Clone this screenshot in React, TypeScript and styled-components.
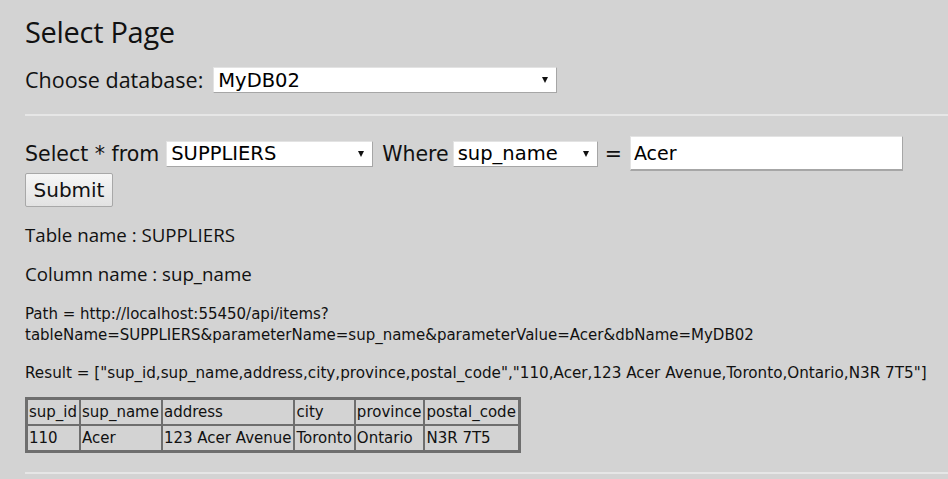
import React from "react";
import styled, { createGlobalStyle } from "styled-components";

const GlobalStyle = createGlobalStyle`
  html, body { margin: 0; padding: 0; background: #d3d3d3; }
  body { font-family: "Open Sans", "Noto Sans", sans-serif; color: #111; }
`;

const Page = styled.div`
  padding: 14px 0 0 25px;
  display: flex;
  flex-direction: column;
`;

const Title = styled.h1`
  margin: 0;
  font-family: "Open Sans", sans-serif;
  font-weight: 400;
  font-size: 29px;
  line-height: 36px;
  letter-spacing: -0.3px;
  color: #111;
`;

const Row = styled.div<{ $mt?: number }>`
  display: flex;
  align-items: center;
  margin-top: ${(p) => p.$mt ?? 0}px;
`;

const Label = styled.span`
  font-family: "Open Sans", sans-serif;
  font-size: 21.5px;
  line-height: 26px;
  margin-right: 10px;
`;

const QueryText = styled.span<{ $l?: number; $r?: number }>`
  font-family: "DejaVu Sans", Verdana, sans-serif;
  font-size: 20.5px;
  margin-left: ${(p) => p.$l ?? 0}px;
  margin-right: ${(p) => p.$r ?? 7}px;
  color: #111;
`;

const SelectWrap = styled.div<{ $w: number }>`
  position: relative;
  width: ${(p) => p.$w}px;
  height: 26px;
  box-sizing: border-box;
  background: #fff;
  border-top: 1px solid #e3e3e3;
  border-left: 1px solid #e3e3e3;
  border-right: 1px solid #a6a6a6;
  border-bottom: 1px solid #a6a6a6;
`;

const NativeSelect = styled.select`
  appearance: none;
  -webkit-appearance: none;
  border: none;
  outline: none;
  background: transparent;
  width: 100%;
  height: 100%;
  padding: 0 0 0 4px;
  margin: 0;
  font-family: "DejaVu Sans", Verdana, sans-serif;
  font-size: 19.5px;
  color: #000;
`;

const Arrow = styled.span`
  position: absolute;
  right: 8px;
  top: 50%;
  margin-top: -3px;
  width: 0;
  height: 0;
  border-left: 3.5px solid transparent;
  border-right: 3.5px solid transparent;
  border-top: 6px solid #111;
  pointer-events: none;
`;

const TextInput = styled.input`
  box-sizing: border-box;
  width: 273px;
  height: 35px;
  margin: 0;
  padding: 0 0 0 3px;
  background: #fff;
  border-top: 1px solid #e3e3e3;
  border-left: 1px solid #e3e3e3;
  border-right: 1px solid #a6a6a6;
  border-bottom: 2px solid #a6a6a6;
  font-family: "DejaVu Sans", Verdana, sans-serif;
  font-size: 19px;
  color: #000;
  outline: none;
`;

const SubmitButton = styled.button`
  box-sizing: border-box;
  width: 88px;
  height: 34px;
  margin: 0;
  padding: 0;
  background: linear-gradient(#f6f6f6, #e2e2e2);
  border: 1px solid #a8a8a8;
  border-radius: 2px;
  font-family: "DejaVu Sans", Verdana, sans-serif;
  font-size: 20px;
  color: #111;
`;

const Divider = styled.hr<{ $mt: number; $mb: number }>`
  border: 0;
  border-top: 2px solid #e6e6e6;
  margin: ${(p) => p.$mt}px 0 ${(p) => p.$mb}px 0;
`;

const Info = styled.p<{ $mt: number }>`
  margin: ${(p) => p.$mt}px 0 0 0;
  font-family: "Open Sans", sans-serif;
  font-size: 18.7px;
  line-height: 26px;
`;

const Small = styled.p<{ $mt: number; $size?: number }>`
  margin: ${(p) => p.$mt}px 0 0 0;
  font-family: "DejaVu Sans", Verdana, sans-serif;
  font-size: ${(p) => p.$size ?? 15}px;
  line-height: 21px;
  color: #111;
`;

const Table = styled.table`
  border-collapse: separate;
  border-spacing: 0;
  border: 2px solid #6e6e6e;
  margin-top: 13px;
  align-self: flex-start;
  font-family: "DejaVu Sans", Verdana, sans-serif;
  font-size: 15px;
`;

const Cell = styled.td`
  border: 1px solid #6e6e6e;
  padding: 1px 2px 1px 1px;
  line-height: 22px;
  white-space: nowrap;
  color: #111;
  text-align: left;
`;

function Select({ w, value, options }: { w: number; value: string; options: string[] }) {
  return (
    <SelectWrap $w={w}>
      <NativeSelect defaultValue={value}>
        {options.map((o) => (
          <option key={o}>{o}</option>
        ))}
      </NativeSelect>
      <Arrow />
    </SelectWrap>
  );
}

const headers = ["sup_id", "sup_name", "address", "city", "province", "postal_code"];
const row = ["110", "Acer", "123 Acer Avenue", "Toronto", "Ontario", "N3R 7T5"];

export default function App() {
  return (
    <>
      <GlobalStyle />
      <Page>
        <Title>Select Page</Title>
        <Row $mt={17}>
          <Label>Choose database:</Label>
          <Select w={344} value="MyDB02" options={["MyDB01", "MyDB02"]} />
        </Row>
        <Divider $mt={21} $mb={20} />
        <Row>
          <QueryText $r={7}>Select * from</QueryText>
          <Select w={207} value="SUPPLIERS" options={["SUPPLIERS", "PRODUCTS"]} />
          <QueryText $l={9} $r={4}>Where</QueryText>
          <Select w={145} value="sup_name" options={["sup_id", "sup_name", "address"]} />
          <QueryText $l={7} $r={8}>=</QueryText>
          <TextInput defaultValue="Acer" />
        </Row>
        <Row $mt={2}>
          <SubmitButton>Submit</SubmitButton>
        </Row>
        <Info $mt={15}>Table name : SUPPLIERS</Info>
        <Info $mt={13}>Column name : sup_name</Info>
        <Small $mt={17}>
          Path = http://localhost:55450/api/items?
          <br />
          tableName=SUPPLIERS&amp;parameterName=sup_name&amp;parameterValue=Acer&amp;dbName=MyDB02
        </Small>
        <Small $mt={17} $size={15.2}>
          Result = ["sup_id,sup_name,address,city,province,postal_code","110,Acer,123 Acer Avenue,Toronto,Ontario,N3R 7T5"]
        </Small>
        <Table>
          <tbody>
            <tr>
              {headers.map((h) => (
                <Cell key={h}>{h}</Cell>
              ))}
            </tr>
            <tr>
              {row.map((c) => (
                <Cell key={c}>{c}</Cell>
              ))}
            </tr>
          </tbody>
        </Table>
        <Divider $mt={19} $mb={0} />
      </Page>
    </>
  );
}
